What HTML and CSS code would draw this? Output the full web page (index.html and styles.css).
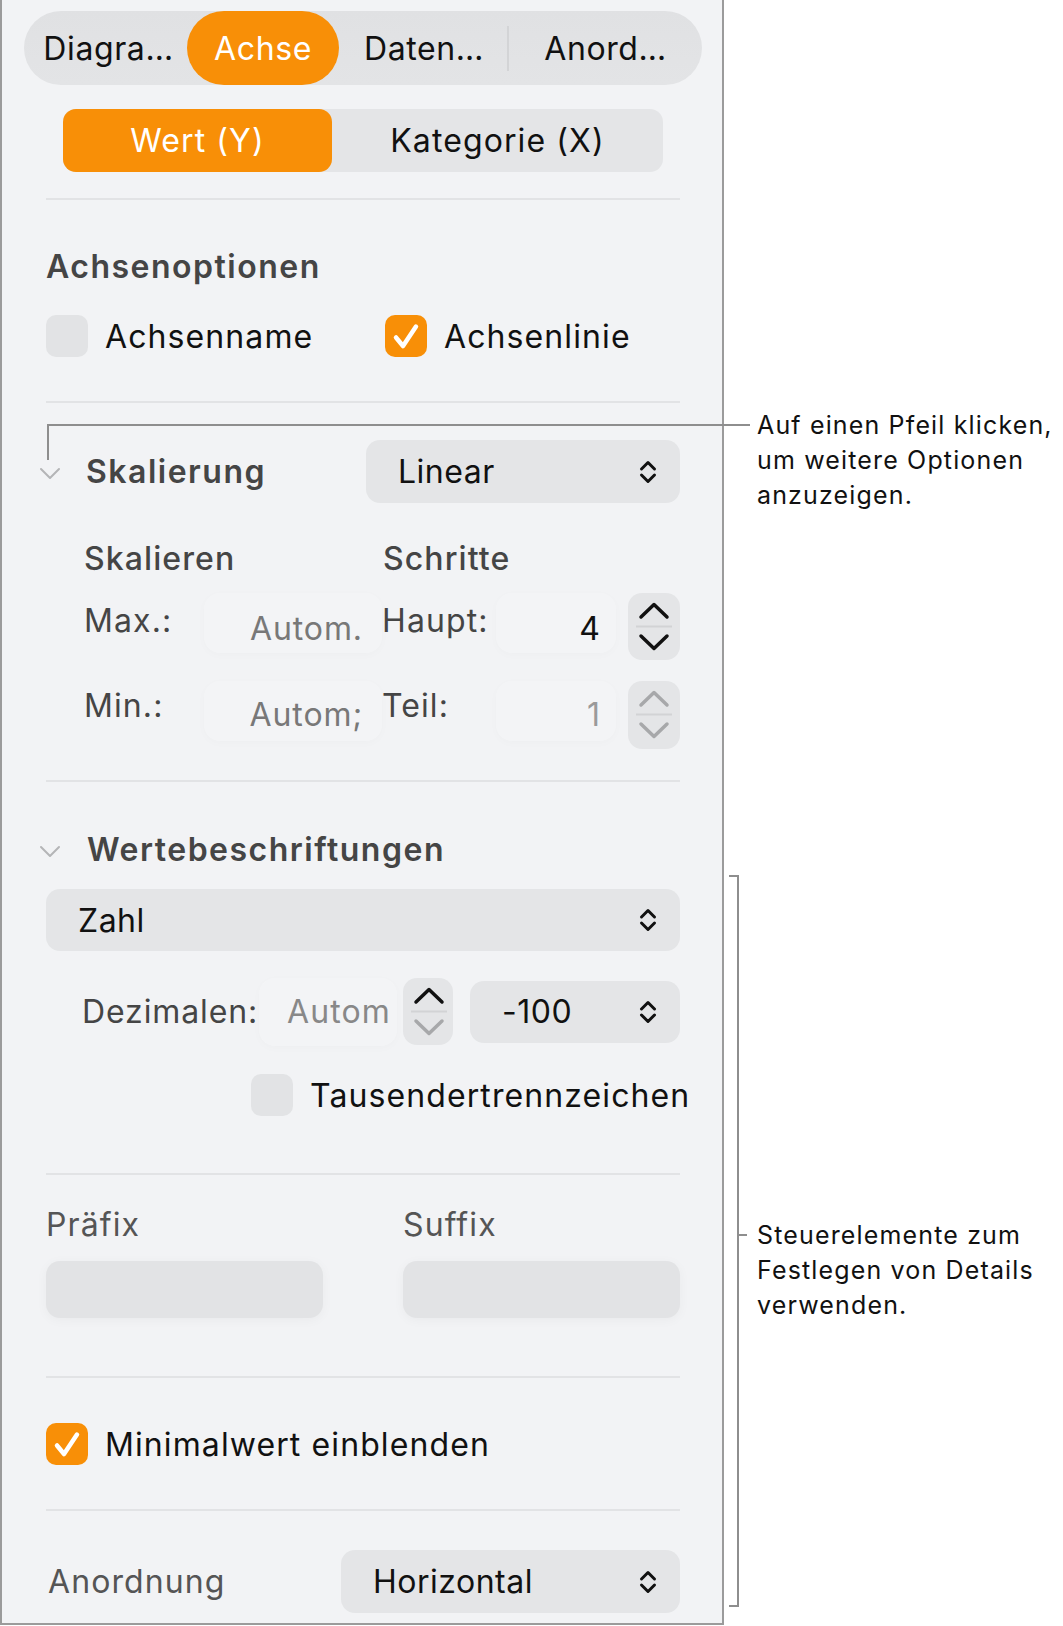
FILE: index.html
```html
<!DOCTYPE html>
<html lang="de">
<head>
<meta charset="utf-8">
<title>Diagramm – Achse</title>
<link rel="stylesheet" href="styles.css">
</head>
<body>
<div class="page">
  <aside class="inspector">
    <nav class="tabs">
      <span class="tab tab-diagram">Diagra…</span>
      <span class="tab tab-axis active">Achse</span>
      <span class="tab tab-data">Daten…</span>
      <span class="tab tab-arrange">Anord…</span>
    </nav>

    <div class="seg">
      <span class="seg-item seg-y active">Wert (Y)</span>
      <span class="seg-item seg-x">Kategorie (X)</span>
    </div>

    <div class="sep sep-a"></div>

    <h2 class="heading heading-options">Achsenoptionen</h2>
    <div class="check-row">
      <label class="check check-name"><span class="box"></span><span class="check-label">Achsenname</span></label>
      <label class="check check-line"><span class="box on"><svg viewBox="0 0 42 42"><path d="M11 22.5 L18 31 L31 11.5"/></svg></span><span class="check-label">Achsenlinie</span></label>
    </div>

    <div class="sep sep-b"></div>

    <div class="disclosure-row scale-row">
      <svg class="disclosure" viewBox="0 0 22 14"><path d="M2 2 L11 11 L20 2"/></svg>
      <h3 class="heading heading-inline">Skalierung</h3>
      <div class="popup popup-linear"><span>Linear</span><svg class="updown" viewBox="0 0 20 28"><path d="M3.5 11 L10 4.5 L16.5 11 M3.5 17 L10 23.5 L16.5 17"/></svg></div>
    </div>

    <div class="sub-heads">
      <span class="sub sub-scale">Skalieren</span>
      <span class="sub sub-steps">Schritte</span>
    </div>

    <div class="num-row num-max">
      <span class="lbl lbl-left">Max.:</span>
      <span class="field field-auto">Autom.</span>
      <span class="lbl lbl-right">Haupt:</span>
      <span class="field field-num">4</span>
      <span class="stepper"><svg viewBox="0 0 52 67"><path class="arrow" d="M13 24 L26 11.5 L39 24"/><path class="mid" d="M8 33.5 H44"/><path class="arrow" d="M13 43 L26 55.5 L39 43"/></svg></span>
    </div>

    <div class="num-row num-min">
      <span class="lbl lbl-left">Min.:</span>
      <span class="field field-auto">Autom;</span>
      <span class="lbl lbl-right">Teil:</span>
      <span class="field field-num dim">1</span>
      <span class="stepper disabled"><svg viewBox="0 0 52 67"><path class="arrow" d="M13 24 L26 11.5 L39 24"/><path class="mid" d="M8 33.5 H44"/><path class="arrow" d="M13 43 L26 55.5 L39 43"/></svg></span>
    </div>

    <div class="sep sep-c"></div>

    <div class="disclosure-row labels-row">
      <svg class="disclosure" viewBox="0 0 22 14"><path d="M2 2 L11 11 L20 2"/></svg>
      <h3 class="heading heading-inline">Wertebeschriftungen</h3>
    </div>

    <div class="popup popup-wide"><span>Zahl</span><svg class="updown" viewBox="0 0 20 28"><path d="M3.5 11 L10 4.5 L16.5 11 M3.5 17 L10 23.5 L16.5 17"/></svg></div>

    <div class="decimal-row">
      <span class="lbl lbl-dec">Dezimalen:</span>
      <span class="field field-dec">Autom</span>
      <span class="stepper stepper-dec"><svg viewBox="0 0 52 67"><path class="arrow" d="M13 24 L26 11.5 L39 24"/><path class="mid" d="M8 33.5 H44"/><path class="arrow off" d="M13 43 L26 55.5 L39 43"/></svg></span>
      <div class="popup popup-neg"><span>-100</span><svg class="updown" viewBox="0 0 20 28"><path d="M3.5 11 L10 4.5 L16.5 11 M3.5 17 L10 23.5 L16.5 17"/></svg></div>
    </div>

    <label class="check check-thousands"><span class="box"></span><span class="check-label">Tausendertrennzeichen</span></label>

    <div class="sep sep-d"></div>

    <div class="affix-heads">
      <span class="affix-lbl">Präfix</span>
      <span class="affix-lbl">Suffix</span>
    </div>
    <div class="affix-fields">
      <span class="text-field"></span>
      <span class="text-field"></span>
    </div>

    <div class="sep sep-e"></div>

    <label class="check check-min"><span class="box on"><svg viewBox="0 0 42 42"><path d="M11 22.5 L18 31 L31 11.5"/></svg></span><span class="check-label">Minimalwert einblenden</span></label>

    <div class="sep sep-f"></div>

    <div class="arrange-row">
      <span class="lbl lbl-arrange">Anordnung</span>
      <div class="popup popup-arrange"><span>Horizontal</span><svg class="updown" viewBox="0 0 20 28"><path d="M3.5 11 L10 4.5 L16.5 11 M3.5 17 L10 23.5 L16.5 17"/></svg></div>
    </div>
  </aside>

  <div class="notes">
    <p class="note note-arrow">Auf einen Pfeil klicken,<br>um weitere Optionen<br>anzuzeigen.</p>
    <p class="note note-details">Steuerelemente zum<br>Festlegen von Details<br>verwenden.</p>
  </div>

  <div class="leader"></div>
  <div class="bracket"></div>
  <div class="bracket-tick"></div>
</div>
</body>
</html>
```

FILE: styles.css
```css
* { box-sizing: border-box; }

html, body {
  margin: 0;
  padding: 0;
  background: #ffffff;
}

body {
  font-family: "Inter", "Liberation Sans", sans-serif;
  color: #111;
}

.page {
  position: relative;
  display: flex;
  width: 1063px;
  height: 1626px;
}

/* ---------- inspector panel ---------- */
.inspector {
  width: 724px;
  height: 1625px;
  flex: none;
  background: #f2f3f5;
  border-left: 2px solid #9b9b9b;
  border-right: 2px solid #9b9b9b;
  border-bottom: 2px solid #9b9b9b;
  display: flex;
  flex-direction: column;
  font-size: 32px;
  letter-spacing: 1.1px;
}

.sep {
  height: 2px;
  margin-left: 44px;
  width: 634px;
  background: #e2e3e5;
  flex: none;
}
.sep-a { margin-top: 26px; }
.sep-b { margin-top: 44px; }
.sep-c { margin-top: 31px; }
.sep-d { margin-top: 57px; }
.sep-e { margin-top: 58px; }
.sep-f { margin-top: 44px; }

/* top tab bar */
.tabs {
  margin: 11px 0 0 22px;
  width: 678px;
  height: 74px;
  border-radius: 37px;
  background: linear-gradient(#e0e1e3, #e3e4e6);
  display: flex;
  align-items: center;
  flex: none;
  letter-spacing: 0.6px;
}
.tab {
  height: 74px;
  display: flex;
  align-items: center;
  justify-content: center;
  color: #111;
  white-space: nowrap;
}
.tab-diagram { width: 163px; padding-left: 6px; }
.tab-axis { width: 152px; }
.tab-data { width: 170px; border-right: 2px solid #d3d4d6; height: 45px; padding-left: 2px; }
.tab-arrange { width: 193px; }
.tab.active {
  background: #f88f07;
  color: #fff;
  border-radius: 37px;
}

/* value / category switch */
.seg {
  margin: 24px 0 0 61px;
  width: 600px;
  height: 63px;
  border-radius: 13px;
  background: #e4e5e7;
  display: flex;
  flex: none;
}
.seg-item {
  display: flex;
  align-items: center;
  justify-content: center;
  color: #111;
  white-space: nowrap;
}
.seg-y { width: 269px; }
.seg-x { flex: 1; }
.seg-item.active {
  background: #f88f07;
  color: #fff;
  border-radius: 13px;
}

/* headings */
.heading {
  margin: 0;
  font-size: 32px;
  font-weight: 600;
  letter-spacing: 1.5px;
  color: #454545;
  line-height: 40px;
  white-space: nowrap;
}
.heading-options {
  margin: 47px 0 0 44px;
  height: 40px;
}

/* checkboxes */
.check-row {
  margin: 28px 0 0 44px;
  height: 42px;
  display: flex;
  flex: none;
}
.check {
  display: flex;
  align-items: center;
  height: 42px;
  flex: none;
}
.check-name { width: 339px; }
.box {
  width: 42px;
  height: 42px;
  border-radius: 10px;
  background: #e2e3e5;
  flex: none;
  display: block;
}
.box.on { background: #f88f07; }
.box svg { width: 42px; height: 42px; display: block; }
.box svg path {
  fill: none;
  stroke: #fff;
  stroke-width: 4.5;
  stroke-linecap: round;
  stroke-linejoin: round;
}
.check-label {
  margin-left: 17px;
  color: #111;
  white-space: nowrap;
}
.check-thousands { margin: 29px 0 0 249px; }
.check-min { margin: 45px 0 0 44px; }

/* disclosure rows */
.disclosure-row {
  display: flex;
  align-items: center;
  flex: none;
  margin-left: 37px;
}
.disclosure {
  width: 22px;
  height: 14px;
  flex: none;
}
.disclosure path {
  fill: none;
  stroke: #b4b5b7;
  stroke-width: 2;
  stroke-linecap: round;
  stroke-linejoin: round;
}
.heading-inline { margin-left: 25px; }

.scale-row {
  margin-top: 37px;
  height: 63px;
}
.scale-row .disclosure { margin-top: 4px; }
.labels-row {
  margin-top: 48px;
  height: 40px;
}
.labels-row .disclosure { margin-top: 4px; }
.labels-row .heading-inline { margin-left: 26px; }

/* popup buttons */
.popup {
  display: flex;
  align-items: center;
  justify-content: space-between;
  height: 63px;
  border-radius: 14px;
  background: #e4e5e7;
  padding: 0 22px 0 32px;
  color: #111;
  flex: none;
  white-space: nowrap;
  letter-spacing: 0.5px;
}
.updown {
  width: 20px;
  height: 28px;
  flex: none;
}
.updown path {
  fill: none;
  stroke: #111;
  stroke-width: 3;
  stroke-linecap: round;
  stroke-linejoin: round;
}
.popup-linear {
  margin-left: auto;
  margin-right: 42px;
  width: 314px;
}
.popup-wide {
  margin: 19px 0 0 44px;
  width: 634px;
  height: 62px;
}
.popup-neg {
  width: 210px;
  height: 62px;
  margin-left: 17px;
}
.popup-arrange {
  width: 339px;
  margin-left: auto;
  margin-right: 42px;
}

/* scale / steps block */
.sub-heads {
  margin: 36px 0 0 82px;
  height: 40px;
  line-height: 40px;
  display: flex;
  flex: none;
  font-weight: 500;
  color: #454545;
}
.sub { flex: none; }
.sub-scale { width: 299px; }

.num-row {
  display: flex;
  align-items: flex-start;
  height: 67px;
  margin-left: 82px;
  flex: none;
  line-height: 40px;
}
.num-max { margin-top: 14px; }
.num-min { margin-top: 21px; height: 68px; }

.lbl { color: #454545; white-space: nowrap; flex: none; }
.num-row .lbl { margin-top: 8px; }
.num-min .lbl { margin-top: 5px; }
.lbl-left { width: 120px; }
.lbl-right { width: 114px; }

/* faint value wells behind numbers */
.field {
  border-radius: 16px;
  background: rgba(255, 255, 255, 0.14);
  box-shadow: 0 2px 10px rgba(0, 0, 0, 0.018);
  white-space: nowrap;
  flex: none;
}
.field-auto {
  width: 178px;
  height: 60px;
  padding: 16px 19px 0 0;
  text-align: right;
  color: #787878;
  line-height: 40px;
  letter-spacing: 0.9px;
}
.num-min .field-auto { padding-top: 14px; }
.field-num {
  width: 120px;
  height: 60px;
  padding: 16px 15px 0 0;
  text-align: right;
  color: #111;
  line-height: 40px;
}
.num-min .field-num { padding-top: 14px; }
.field-num.dim { color: #9a9a9a; }

.stepper {
  width: 52px;
  height: 67px;
  border-radius: 14px;
  background: #e4e5e7;
  margin-left: 12px;
  flex: none;
}
.num-min .stepper { height: 68px; }
.stepper svg { width: 52px; height: 67px; display: block; }
.stepper .arrow {
  fill: none;
  stroke: #111;
  stroke-width: 3.5;
  stroke-linecap: round;
  stroke-linejoin: round;
}
.stepper .mid {
  fill: none;
  stroke: #d2d3d5;
  stroke-width: 2;
}
.stepper.disabled .arrow,
.stepper .arrow.off { stroke: #a7a8aa; }

/* decimals row */
.decimal-row {
  display: flex;
  align-items: center;
  margin: 27px 0 0 80px;
  height: 67px;
  flex: none;
}
.lbl-dec { width: 177px; letter-spacing: 0.9px; }
.field-dec {
  width: 138px;
  height: 68px;
  padding: 0 0 0 28px;
  display: flex;
  align-items: center;
  color: #888;
}
.stepper-dec { margin-left: 6px; width: 50px; }

/* prefix / suffix */
.affix-heads {
  display: flex;
  margin: 30px 0 0 44px;
  height: 40px;
  line-height: 40px;
  flex: none;
}
.affix-lbl { width: 357px; flex: none; color: #555; }
.affix-fields {
  display: flex;
  margin: 16px 0 0 44px;
  gap: 80px;
  flex: none;
}
.text-field {
  width: 277px;
  height: 57px;
  flex: none;
  border-radius: 14px;
  background: #e2e3e5;
  box-shadow: 0 2px 12px rgba(0, 0, 0, 0.04);
}

/* arrangement */
.arrange-row {
  display: flex;
  align-items: center;
  margin: 39px 0 0 46px;
  height: 63px;
  flex: none;
}
.lbl-arrange { color: #555; }

/* ---------- callouts ---------- */
.notes {
  margin-left: 33px;
  font-family: "Inter", "Liberation Sans", sans-serif;
  font-size: 25px;
  line-height: 35px;
  letter-spacing: 1.15px;
  color: #111;
}
.note { margin: 0; white-space: nowrap; }
.note-arrow { margin-top: 408px; }
.note-details { margin-top: 705px; }

.leader {
  position: absolute;
  left: 47px;
  top: 424px;
  width: 703px;
  height: 36px;
  border-top: 2px solid #8e8e8e;
  border-left: 2px solid #8e8e8e;
}
.bracket {
  position: absolute;
  left: 729px;
  top: 875px;
  width: 10px;
  height: 732px;
  border-top: 2px solid #8e8e8e;
  border-right: 2px solid #8e8e8e;
  border-bottom: 2px solid #8e8e8e;
}
.bracket-tick {
  position: absolute;
  left: 739px;
  top: 1234px;
  width: 8px;
  height: 2px;
  background: #8e8e8e;
}
```
